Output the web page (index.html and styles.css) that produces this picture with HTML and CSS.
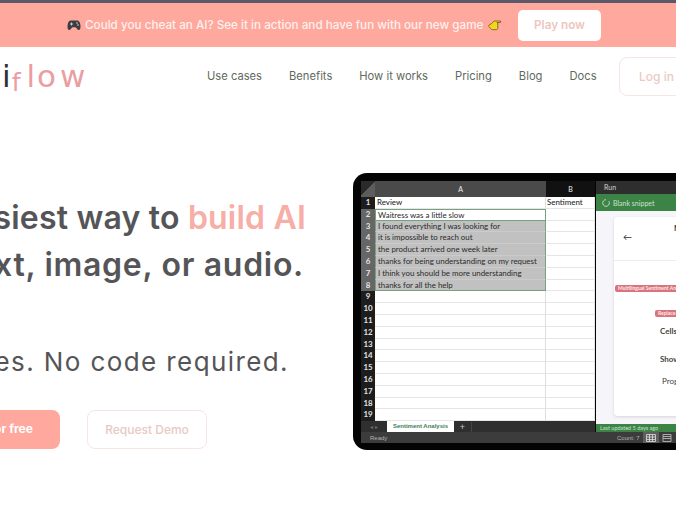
FILE: index.html
```html
<!DOCTYPE html>
<html lang="en">

<head>
    <meta charset="UTF-8" />
    <meta name="viewport" content="width=device-width, initial-scale=1.0" />
    <title>iflow</title>
    <link rel="stylesheet" href="styles.css">
</head>

<body>
    <div class="page">
        <div class="banner">
            <svg class="emoji-pad" width="14" height="12" viewBox="0 0 14 12">
                <path d="M4 1.5h6c2 0 3 1.5 3.4 4.5.4 3-.3 5-1.6 5-1.200 0-2-2-3.300-2.800H5.500C4.200 9 3.400 11 2.200 11 .9 11 .2 9 .6 6 1 3 2 1.500 4 1.500z" fill="#3d3d42" />
                <path d="M3 5h3M4.500 3.500v3" stroke="#c9c9cf" stroke-width="1" />
                <circle cx="10" cy="4" r=".8" fill="#d8d8dc" />
                <circle cx="11" cy="6" r=".8" fill="#d8d8dc" />
            </svg>
            <span class="banner-text">Could you cheat an AI? See it in action and have fun with our new game</span>
            <svg class="emoji-hand" width="13" height="11" viewBox="0 0 13 11">
                <path d="M.7 5.500 4 3.300 6 1h6.500v1.500H8.800l1 .6v5.200c-.1.900-.7 1.400-1.500 1.400H4.300C3 9.700 2.600 8 1.500 7.200.8 6.800.5 6.200.7 5.500z" fill="#f7d51d" stroke="#6b5a10" stroke-width=".8" />
            </svg>
            <a class="banner-btn">Play now</a>
        </div>

        <header class="topnav">
            <div class="logo"><span class="logo-i">i</span><span class="logo-f">f</span><span class="logo-l">l</span><span class="logo-o">o</span>w</div>
            <nav class="links">
                <a>Use cases</a>
                <a>Benefits</a>
                <a>How it works</a>
                <a>Pricing</a>
                <a>Blog</a>
                <a>Docs</a>
            </nav>
            <a class="login">Log in</a>
        </header>

        <section class="hero">
            <div class="copy">
                <h1 class="line-one">The easiest way to <em>build AI</em></h1>
                <h1 class="line-two">for text, image, or audio.</h1>
                <p class="sub">In minutes. No code required.</p>
                <div class="actions">
                    <a class="btn-main">Try for free</a>
                    <a class="btn-demo">Request Demo</a>
                </div>
            </div>

            <div class="screen">
                <div class="screen-top">
                    <div class="left-pane">
                        <div class="sheet">
                            <div class="row head"><span class="num corner"></span><span class="a">A</span><span class="b">B</span></div>
                            <div class="row"><span class="num">1</span><span class="a bold">Review</span><span class="b bold">Sentiment</span></div>
                            <div class="row sel first"><span class="num">2</span><span class="a">Waitress was a little slow</span><span class="b"></span></div>
                            <div class="row sel"><span class="num">3</span><span class="a">I found everything I was looking for</span><span class="b"></span></div>
                            <div class="row sel"><span class="num">4</span><span class="a">it is impossible to reach out</span><span class="b"></span></div>
                            <div class="row sel"><span class="num">5</span><span class="a">the product arrived one week later</span><span class="b"></span></div>
                            <div class="row sel"><span class="num">6</span><span class="a">thanks for being understanding on my request</span><span class="b"></span></div>
                            <div class="row sel"><span class="num">7</span><span class="a">I think you should be more understanding</span><span class="b"></span></div>
                            <div class="row sel last"><span class="num">8</span><span class="a">thanks for all the help</span><span class="b"></span></div>
                            <div class="row"><span class="num">9</span><span class="a"></span><span class="b"></span></div>
                            <div class="row"><span class="num">10</span><span class="a"></span><span class="b"></span></div>
                            <div class="row"><span class="num">11</span><span class="a"></span><span class="b"></span></div>
                            <div class="row"><span class="num">12</span><span class="a"></span><span class="b"></span></div>
                            <div class="row"><span class="num">13</span><span class="a"></span><span class="b"></span></div>
                            <div class="row"><span class="num">14</span><span class="a"></span><span class="b"></span></div>
                            <div class="row"><span class="num">15</span><span class="a"></span><span class="b"></span></div>
                            <div class="row"><span class="num">16</span><span class="a"></span><span class="b"></span></div>
                            <div class="row"><span class="num">17</span><span class="a"></span><span class="b"></span></div>
                            <div class="row"><span class="num">18</span><span class="a"></span><span class="b"></span></div>
                            <div class="row"><span class="num">19</span><span class="a"></span><span class="b"></span></div>
                        </div>
                        <div class="tabs">
                            <span class="tab-arrows">&#9666; &#9656;</span>
                            <span class="tab">Sentiment Analysis</span>
                            <span class="tab-add">+</span>
                        </div>
                    </div>
                    <div class="panel">
                        <div class="panel-run">Run</div>
                        <div class="panel-green">
                            <svg width="8" height="8" viewBox="0 0 8 8">
                                <path d="M6.800 2.200A3.300 3.300 0 1 1 4 .7" fill="none" stroke="#e4efe5" stroke-width=".8" />
                            </svg>
                            <span>Blank snippet</span>
                        </div>
                        <div class="panel-body">
                            <div class="card">
                                <div class="card-head">
                                    <span class="back">&#8592;</span>
                                    <span class="card-title">Multilingual</span>
                                </div>
                                <div class="card-main">
                                    <span class="tag tag-long">Multilingual Sentiment Analysis</span>
                                    <span class="tag tag-short">Replace cells</span>
                                    <span class="field field-cells">Cells to</span>
                                    <span class="field field-show">Show progress</span>
                                    <span class="field field-prog">Progress</span>
                                </div>
                            </div>
                        </div>
                        <div class="panel-foot">Last updated 5 days ago</div>
                    </div>
                </div>
                <div class="status">
                    <span class="ready">Ready</span>
                    <span class="count">Count: 7</span>
                    <span class="view view-on">
                        <svg width="10" height="8" viewBox="0 0 10 8">
                            <path d="M.5.500h9v7h-9zM.5 3h9M.5 5.500h9M3.500.5v7M6.500.5v7" fill="none" stroke="#e0e0e0" stroke-width=".8" />
                        </svg>
                    </span>
                    <span class="view">
                        <svg width="10" height="8" viewBox="0 0 10 8">
                            <path d="M1 .5h8v7H1zM1 2.500h8M1 4.500h8" fill="none" stroke="#b5b5b5" stroke-width=".9" />
                        </svg>
                    </span>
                </div>
            </div>
        </section>
    </div>
</body>

</html>
```

FILE: styles.css
```css
html,
body {
    margin: 0;
    padding: 0;
    height: 100%;
}

body {
    background-color: white;
    font-family: "Inter", "Liberation Sans", sans-serif;
    overflow: hidden;
}

.page {
    width: 676px;
    height: 508px;
    overflow: hidden;
}

/* top banner */
.banner {
    box-sizing: border-box;
    height: 47px;
    border-top: 3px solid #5b5869;
    background-color: #ffa89d;
    display: flex;
    align-items: center;
    padding-left: 67px;
    color: #fdf1ee;
    font-size: 11.700px;
    font-weight: 500;
}

.banner-text {
    margin-left: 4px;
    width: 399px;
    white-space: nowrap;
}

.emoji-hand {
    margin-left: 4px;
}

.banner-btn {
    margin-left: 17px;
    box-sizing: border-box;
    width: 83px;
    height: 31px;
    border-radius: 5px;
    background-color: white;
    color: #eec6c0;
    text-align: center;
    line-height: 31px;
    font-weight: 600;
}

/* nav */
.topnav {
    height: 58px;
    display: flex;
    align-items: center;
    padding-left: 2px;
}

.logo {
    width: 205px;
    flex-shrink: 0;
    font-family: "DejaVu Sans", sans-serif;
    font-size: 31px;
    color: #ea9ea2;
    line-height: 40px;
    margin-top: 6px;
}

.logo-i {
    color: #2f3036;
    letter-spacing: 1px;
}

.logo-f {
    font-size: 25px;
    vertical-align: -4px;
    letter-spacing: 6px;
}

.logo-l {
    letter-spacing: 2px;
}

.logo-o {
    letter-spacing: 4px;
}

.links {
    display: flex;
    gap: 27px;
    width: 391px;
    flex-shrink: 0;
    font-size: 11.200px;
    color: #5f6a60;
    white-space: nowrap;
}

.login {
    margin-left: 21px;
    flex-shrink: 0;
    box-sizing: border-box;
    width: 72px;
    height: 39px;
    border: 1px solid #f5e6e2;
    border-radius: 8px;
    color: #eccac4;
    font-size: 12px;
    font-weight: 500;
    line-height: 37px;
    padding-left: 19px;
}

/* hero */
.hero {
    display: flex;
    align-items: flex-start;
    padding-top: 68px;
}

.copy {
    width: 353px;
    flex-shrink: 0;
    display: flex;
    flex-direction: column;
    align-items: flex-end;
    padding-top: 21px;
    color: #555558;
    white-space: nowrap;
}

.copy h1 {
    margin: 0;
    font-size: 32px;
    font-weight: 600;
    line-height: 47px;
}

.copy h1 em {
    font-style: normal;
    color: #f6aea6;
}

.copy .line-one {
    margin-right: 47px;
    letter-spacing: 0.2px;
}

.copy .line-two {
    margin-right: 49px;
    letter-spacing: 0.7px;
}

.sub {
    margin: 54px 64px 0 0;
    font-size: 26px;
    line-height: 40px;
    letter-spacing: 1.400px;
}

.actions {
    margin: 28px 146px 0 0;
    display: flex;
    gap: 27px;
    font-size: 12px;
}

.btn-main {
    box-sizing: border-box;
    width: 120px;
    height: 39px;
    border-radius: 8px;
    background-color: #ffa89d;
    color: white;
    font-weight: 700;
    line-height: 37px;
    text-align: center;
}

.btn-demo {
    box-sizing: border-box;
    width: 120px;
    height: 39px;
    border: 1px solid #f5e6e2;
    border-radius: 8px;
    color: #e8c9c4;
    font-weight: 500;
    line-height: 37px;
    text-align: center;
}

/* spreadsheet screenshot */
.screen {
    flex-shrink: 0;
    box-sizing: border-box;
    width: 420px;
    height: 277px;
    padding: 8px 0 7px 8px;
    background-color: #040404;
    border-radius: 14px;
    display: flex;
    flex-direction: column;
    font-family: "Lato", "Liberation Sans", sans-serif;
}

.screen-top {
    display: flex;
    height: 251px;
}

.left-pane {
    width: 234px;
    flex-shrink: 0;
    display: flex;
    flex-direction: column;
}

.sheet {
    background-color: white;
    display: flex;
    flex-direction: column;
}

.row {
    display: grid;
    grid-template-columns: 14px 171px 49px;
    height: 11.800px;
    line-height: 11.800px;
    font-size: 7.900px;
    color: #2a2a2a;
}

.row span {
    box-sizing: border-box;
    border-bottom: 1px solid #e6e6e6;
    white-space: nowrap;
    overflow: hidden;
}

.row .a {
    padding-left: 2px;
    border-right: 1px solid #dedede;
}

.row .b {
    padding-left: 1px;
    border-right: 1px solid #e6e6e6;
}

.row .num {
    background-color: #1d1d1d;
    color: #e4e4e4;
    border-bottom-color: #1d1d1d;
    text-align: center;
    font-weight: 700;
}

.row .bold {
    font-weight: 500;
}

.row.head {
    height: 16px;
    line-height: 16px;
    font-size: 7px;
}

.row.head span {
    border-bottom: none;
    color: #eeeeee;
    text-align: center;
    padding: 0;
}

.row.head .corner {
    background: linear-gradient(135deg, #2a2a2a 50%, #5c5c5c 50%);
}

.row.head .a {
    background-color: #4a4a4a;
    border-right: none;
}

.row.head .b {
    background-color: #111111;
    border-right: none;
}

.row.sel .a {
    background-color: #c1c1c1;
    border-left: 1px solid #78a080;
    border-right: 1px solid #78a080;
    border-bottom-color: #cbcbcb;
}

.row.sel .num {
    background-color: #666666;
    border-bottom-color: #666666;
}

.row.first .a {
    background-color: white;
    border-top: 1px solid #78a080;
    border-bottom-color: #78a080;
    line-height: 10px;
}

.row.last .a {
    border-bottom-color: #78a080;
}

.tabs {
    height: 11px;
    background-color: #2f2f2f;
    display: flex;
    align-items: center;
    color: #6c6c6c;
    font-size: 6px;
    font-family: "Liberation Sans", sans-serif;
}

.tab-arrows {
    width: 26px;
    text-align: center;
}

.tab {
    box-sizing: border-box;
    width: 67px;
    height: 11px;
    line-height: 10px;
    background-color: white;
    color: #3f7d57;
    font-weight: 700;
    text-align: center;
}

.tab-add {
    width: 17px;
    text-align: center;
    color: #c9c9c9;
    font-size: 9px;
    border-right: 1px solid #444444;
}

.panel {
    flex: 1;
    margin-left: 1px;
    display: flex;
    flex-direction: column;
    overflow: hidden;
    white-space: nowrap;
}

.panel-run {
    height: 13px;
    line-height: 12px;
    background-color: #2e2e2e;
    color: #d4d4d4;
    font-size: 7px;
    padding-left: 8px;
}

.panel-green {
    height: 17px;
    background-color: #3c8346;
    color: #cfe2d1;
    font-size: 7px;
    display: flex;
    align-items: center;
    gap: 3px;
    padding-left: 6px;
}

.panel-body {
    flex: 1;
    background-color: #f6f5fa;
    padding: 6px 0 8px 18px;
    display: flex;
}

.panel-foot {
    height: 8px;
    line-height: 8px;
    background-color: #3c8346;
    color: #cfe2d1;
    font-size: 5.500px;
    padding-left: 4px;
}

.card {
    flex: 1;
    background-color: white;
    border-radius: 4px 0 0 4px;
    box-shadow: 0 1px 3px rgba(120, 120, 140, 0.25);
    display: flex;
    flex-direction: column;
}

.card-head {
    height: 43px;
    border-bottom: 1px solid #ececec;
    display: flex;
    padding-left: 9px;
    font-size: 8px;
    color: #333333;
    justify-content: flex-start;
}

.back {
    margin-top: 14px;
    font-size: 9px;
}

.card-title {
    margin: 6px 0 0 42px;
    font-size: 8px;
    font-weight: 700;
}

.card-main {
    display: flex;
    flex-direction: column;
    align-items: flex-start;
    color: #444444;
    font-size: 8px;
    font-weight: 700;
}

.tag {
    background-color: #d9737c;
    color: #fbe9ea;
    font-size: 5px;
    line-height: 7px;
    border-radius: 2px;
    padding: 0 3px;
}

.tag-long {
    margin: 24px 0 0 1px;
}

.tag-short {
    margin: 18px 0 0 41px;
}

.field-cells {
    margin: 9px 0 0 46px;
}

.field-show {
    margin: 18px 0 0 46px;
}

.field-prog {
    margin: 12px 0 0 48px;
    font-weight: 400;
}

.status {
    height: 11px;
    background-color: #3c3c3c;
    display: flex;
    align-items: center;
    color: #b4b4b4;
    font-size: 6px;
    font-family: "Liberation Sans", sans-serif;
}

.ready {
    margin-left: 9px;
    width: 247px;
}

.count {
    width: 26px;
}

.view {
    width: 16px;
    height: 11px;
    display: flex;
    align-items: center;
    justify-content: center;
}

.view-on {
    background-color: #5e5e5e;
}
```
